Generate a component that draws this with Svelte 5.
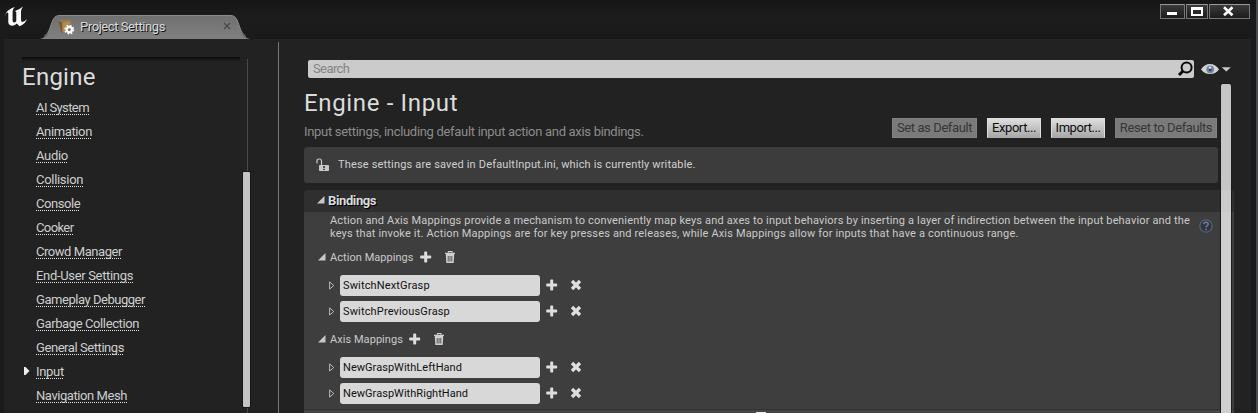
<script>
  const sections = [
    ['AI System', -0.6], ['Animation', -0.37], ['Audio', -0.3], ['Collision', -0.3], ['Console', -0.45],
    ['Cooker', -0.6], ['Crowd Manager', -0.45], ['End-User Settings', -0.33], ['Gameplay Debugger', -0.46],
    ['Garbage Collection', -0.39], ['General Settings', -0.43], ['Input', -0.3], ['Navigation Mesh', -0.43]
  ];
  const active = 'Input';
  const groups = [
    { title: 'Action Mappings', rows: [['SwitchNextGrasp', 0.15], ['SwitchPreviousGrasp', 0.15]] },
    { title: 'Axis Mappings', rows: [['NewGraspWithLeftHand', 0.04], ['NewGraspWithRightHand', 0.04]] }
  ];
</script>

{#snippet plus()}
  <svg class="plus" width="12" height="12" viewBox="0 0 12 12"><path d="M4.200 1.300q0-.8.800-.8h1.400q.8 0 .8.800v3.200h3.200q.8 0 .8.800v1.400q0 .8-.8.800H7.200v3.200q0 .8-.8.800H5q-.8 0-.8-.8V7.500H1q-.8 0-.8-.8V5.300q0-.8.8-.8h3.200z" fill="#dedede" /></svg>
{/snippet}

{#snippet triangle()}
  <svg class="tri" width="8" height="8" viewBox="0 0 8 8"><path d="M7.500 0v7.500H0z" fill="#c8c8c8" /></svg>
{/snippet}

<div class="window">
  <header class="titlebar">
    <svg class="logo" width="25" height="23" viewBox="0 0 25 23">
      <path d="M.5 11.500Q2.500 4.500 10.800 2Q8.600 4 8.600 6.500V15.500q0 2 1.400 2q1 0 2.300-1.300V7.500q0-1.500-1.800-1.300Q15 5 19 1.500Q17 4.200 17 6.500V15.300q0 1.700 1.400 1.700q1.500 0 4.600-2.800Q21 19 15.500 21.300L12.900 18.500Q10.500 20.800 7.800 20.800Q4.300 20.300 4.300 17V8.800q0-1.400-.9-1.400Q1.900 8 .5 11.500z" fill="#fff" />
    </svg>
    <div class="tab">
      <svg class="tabshape" width="210" height="24" viewBox="0 0 210 24">
        <defs><linearGradient id="tg" x1="0" y1="0" x2="0" y2="1"><stop offset="0" stop-color="#707070" /><stop offset="1" stop-color="#808080" /></linearGradient></defs>
        <path d="M0 24C7 22.500 8 18 10 13C13 4 14 .5 20 .5H190C196 .5 197 4 200 13C202 18 203 22.500 210 24z" fill="url(#tg)" />
        <path d="M4 21.500C7.500 19 8.500 16.500 10 13C13 4 14 .5 20 .5H190C196 .5 197 4 200 13C201.500 16.500 202.500 19 206 21.500" fill="none" stroke="#8c8c8c" stroke-width="1" />
      </svg>
      <svg class="tabicon" width="17" height="17" viewBox="0 0 17 17">
        <path d="M.5 1.500L12 1v8L6 14H4z" fill="#a07a4b" /><path d="M.5 1.500L4.500 4v10.500L3 13z" fill="#7a5932" /><path d="M4.500 4l8-2v7l-8 4z" fill="#b48a56" /><path d="M8 8l3-3 2 1v3z" fill="#7e8a45" />
        <circle cx="11.300" cy="10.600" r="2.700" fill="none" stroke="#fff" stroke-width="2.200" />
        <circle cx="11.300" cy="10.600" r="4.200" fill="none" stroke="#fff" stroke-width="1.600" stroke-dasharray="1.700 1.600" />
      </svg>
      <span class="tabtext">Project Settings</span>
      <svg class="tabclose" width="8" height="8" viewBox="0 0 8 8"><path d="M1 1l6 6M7 1l-6 6" stroke="#484848" stroke-width="1.200" /></svg>
    </div>
    <div class="winbtns">
      <span><svg width="23" height="14"><rect x="6" y="8" width="10" height="3" fill="#fff" /></svg></span>
      <span><svg width="20" height="14"><path d="M4 3h12v9H4zM6 6v4h8V6z" fill="#fff" fill-rule="evenodd" /></svg></span>
      <span><svg width="39" height="14"><path d="M14 3.200l8.500 8M22.500 3.200l-8.500 8" stroke="#fff" stroke-width="2.600" /></svg></span>
    </div>
  </header>

  <div class="body">
    <nav class="side">
      <div class="shade"></div>
      <h2>Engine</h2>
      <ul>
        {#each sections as [name, spacing]}
          <li>
            <span class="mark">{#if name === active}<svg width="6" height="10" viewBox="0 0 6 10"><path d="M0 1h1.500L5.500 5L1.500 9H0z" fill="#eee" /></svg>{/if}</span>
            <span class="link" style:letter-spacing="{spacing}px">{name}</span>
          </li>
        {/each}
      </ul>
    </nav>
    <div class="sidescroll"><i></i></div>
    <div class="divider"></div>

    <main>
      <div class="searchrow">
        <div class="search">
          <span>Search</span>
          <svg width="16" height="16" viewBox="0 0 16 16"><circle cx="9.600" cy="6.500" r="5" fill="none" stroke="#0a0a0a" stroke-width="2" /><path d="M5.800 10.300L2 14" stroke="#0a0a0a" stroke-width="3" /></svg>
        </div>
        <svg class="eye" width="30" height="14" viewBox="0 0 30 14">
          <path d="M0 7.500Q3.500 2 9 2Q14.500 2 18 7.500Q14.500 12 9 12Q3.500 12 0 7.500z" fill="#d4d4d0" />
          <circle cx="9.200" cy="7.300" r="3.900" fill="#7385a6" /><circle cx="9.200" cy="7.800" r="1.500" fill="#33415c" /><circle cx="9" cy="5.600" r="1.200" fill="#e3e9f3" />
          <path d="M20.800 5.300h9l-4.500 4.300z" fill="#c9c9c9" />
        </svg>
      </div>
      <div class="headrow">
        <div>
          <h1>Engine - Input</h1>
          <p class="desc">Input settings, including default input action and axis bindings.</p>
        </div>
        <div class="btns">
          <button class="off w85">Set as Default</button>
          <button>Export...</button>
          <button>Import...</button>
          <button class="off w102">Reset to Defaults</button>
        </div>
      </div>
      <div class="notice">
        <svg width="14" height="14" viewBox="0 0 14 14"><path d="M1 5.500V3Q1 1 3.300 1Q5.500 1 5.500 3V7" fill="none" stroke="#c8c8c8" stroke-width="1.200" /><rect x="3" y="7" width="10" height="6" rx=".8" fill="#c8c8c8" /><path d="M8 8v2.200M8 11v1" stroke="#333" stroke-width="1.600" /></svg>
        <span>These settings are saved in DefaultInput.ini, which is currently writable.</span>
      </div>
      <section>
        <div class="sechead">{@render triangle()}<span>Bindings</span></div>
        <div class="secbody">
          <div class="para">
            <p>Action and Axis Mappings provide a mechanism to conveniently map keys and axes to input behaviors by inserting a layer of indirection between the input behavior and the<br />keys that invoke it. Action Mappings are for key presses and releases, while Axis Mappings allow for inputs that have a continuous range.</p>
            <svg width="16" height="16" viewBox="0 0 16 16"><circle cx="8" cy="8" r="6.200" fill="#303640" stroke="#566072" stroke-width="1.300" /><path d="M5.900 6.300Q5.900 4.300 8 4.300Q10.200 4.300 10.200 6.100Q10.200 7.200 9 7.900Q8.100 8.400 8.100 9.500M8.100 10.700v1.500" fill="none" stroke="#727d90" stroke-width="1.500" /></svg>
          </div>
          {#each groups as g}
            <div class="group">
              {@render triangle()}<span>{g.title}</span>{@render plus()}
              <svg class="bin" width="10" height="12" viewBox="0 0 10 12"><path d="M3.500 1.500V.5h3.500v1M0 2.300h10M1 3.500h8" fill="none" stroke="#d0d0d0" stroke-width="1.200" /><path d="M.8 3.500h8.400L8.700 12H1.300z" fill="#d0d0d0" /><path d="M3.200 5v5.500M5 5v5.500M6.800 5v5.500" stroke="#4a4a4a" stroke-width=".9" /></svg>
            </div>
            {#each g.rows as [name, spacing]}
              <div class="row">
                <svg class="exp" width="6" height="9" viewBox="0 0 6 9"><path d="M.6 .9v7.200L4.800 4.500z" fill="none" stroke="#b8b8b8" stroke-width="1" /></svg>
                <div class="field" style:letter-spacing="{spacing}px">{name}</div>
                {@render plus()}
                <svg class="del" width="12" height="12" viewBox="0 0 12 12"><path d="M2 2l8 8M10 2l-8 8" stroke="#dedede" stroke-width="3.300" /></svg>
              </div>
            {/each}
          {/each}
        </div>
        <div class="next"><i></i></div>
      </section>
      <div class="mainscroll"></div>
    </main>
  </div>
</div>

<style>
  :global(body) { background: #222; overflow: hidden; }
  .window { box-sizing: border-box; width: 1258px; height: 413px; overflow: hidden; font-family: Roboto, sans-serif; font-size: 13px; color: #ccc; background: #1b1b1b; border-right: 2px solid #4b4b52; }
  svg { display: block; flex: none; }
  .titlebar { height: 39px; display: flex; background: linear-gradient(#151515, #1c1c1c 40%, #1a1a1a); }
  .logo { margin: 5px 0 0 4px; }
  .tab { position: relative; width: 210px; height: 24px; margin: 15px 0 0 11px; display: flex; align-items: center; color: #dadada; }
  .tabshape { position: absolute; left: 0; top: 0; }
  .tabicon { position: relative; margin: 0 0 0 18px; }
  .tabtext { position: relative; margin: -2px 0 0 5px; flex: 1; letter-spacing: -.42px; text-shadow: 1px 1px 0 #111; }
  .tabclose { position: relative; margin: -2px 19px 0 0; }
  .winbtns { margin: 4px 6px 0 auto; display: flex; gap: 1px; height: 15px; }
  .winbtns span { box-sizing: border-box; height: 15px; border: 1px solid #777; border-top-color: #999; background: linear-gradient(#3a3a3a, #1c1c1c); }
  .winbtns svg { margin-top: -1px; }

  .body { display: flex; height: 374px; margin: 0 5px 0 4px; background: #222; }
  .side { width: 218px; padding: 18px 0 0 18px; }
  .shade { height: 5px; background: linear-gradient(#0c0c0c, #222); }
  h1, h2 { font-weight: 400; font-size: 24px; line-height: 28px; margin: 0; color: #dcdcdc; }
  h2 { margin-top: 1px; letter-spacing: .25px; }
  ul { list-style: none; padding: 0; margin: 5px 0 0; }
  li { height: 24px; display: flex; align-items: flex-start; }
  .mark { width: 14px; padding: 2px 0 0 2px; box-sizing: border-box; height: 20px; display: flex; align-items: center; }
  .link { line-height: 15px; padding-top: 4px; color: #cecece;
    background: repeating-linear-gradient(90deg, #e4e4e4 0 1px, transparent 1px 2px) 0 100% / 100% 1px no-repeat; }
  .sidescroll { width: 7px; margin: 20px 0 0 3px; background: linear-gradient(90deg, transparent 4px, #484848 4px 5px, transparent 5px); }
  .sidescroll i { display: block; width: 7px; height: 235px; margin-top: 113px; background: #c4c4c4; border-radius: 1px; box-shadow: 0 0 0 1px #171717; }
  .divider { width: 1px; margin: 3px 0 0 28px; background: #777; }

  main { position: relative; flex: 1; padding: 21px 0 0 25px; }
  .searchrow { display: flex; align-items: center; height: 18px; padding-left: 4px; }
  .search { width: 886px; height: 18px; box-sizing: border-box; padding: 0 1px 0 5px; background: #cbcbcb; border-radius: 2px; display: flex; align-items: center; justify-content: space-between; color: #858585; letter-spacing: -.6px; }
  .search span { margin-top: -1px; }
  .eye { margin: 0 0 0 7px; }
  .headrow { display: flex; justify-content: space-between; width: 913px; height: 69px; }
  h1 { margin-top: 11px; letter-spacing: .65px; white-space: nowrap; }
  .desc { margin: 7px 0 0; line-height: 16px; color: #8c8c8c; letter-spacing: -.31px; white-space: nowrap; }
  .btns { display: flex; gap: 10px; margin-top: 40px; }
  button { width: 54px; height: 20px; box-sizing: border-box; border: 1px solid #dcdcdc; border-bottom-color: #aaa; background: linear-gradient(#dedede, #a8a8a8); color: #0d0d0d; font: 13px/16px Roboto, sans-serif; letter-spacing: -.45px; padding: 0; white-space: nowrap; }
  .off { background: #7a7a7a; border-color: #828282; color: #363636; letter-spacing: -.4px; }
  .w85 { width: 85px; }
  .w102 { width: 102px; }
  .notice { width: 914px; height: 36px; box-sizing: border-box; padding: 0 0 2px 12px; display: flex; align-items: center; gap: 8px; background: #3c3c3c; border-radius: 3px; font-size: 11px; letter-spacing: .17px; color: #d0d0d0; }
  .notice svg { margin-top: 2px; }
  section { width: 930px; margin-top: 7px; font-size: 11px; }
  .sechead { height: 22px; box-sizing: border-box; display: flex; align-items: center; gap: 4px; padding: 0 0 2px 13px; background: #2f2f2f; border-radius: 3px 3px 0 0; color: #ddd; font-weight: 700; font-size: 13px; letter-spacing: -.38px; text-shadow: 1px 1px 0 #000; }
  .sechead span { margin-left: -1px; }
  .secbody { height: 197px; background: #3e3e3e; }
  .para { display: flex; padding: 2px 0 0 26px; height: 31px; }
  .para p { margin: 0; width: 868px; line-height: 13px; letter-spacing: .162px; white-space: nowrap; color: #cacaca; }
  .para svg { margin-top: 4px; }
  .group { height: 26px; box-sizing: border-box; display: flex; align-items: center; padding: 0 0 2px 14px; }
  .para + .group { height: 30px; padding-bottom: 6px; }
  .group .tri { margin-top: -1px; }
  .group span { margin: 0 6px 0 4px; letter-spacing: .05px; color: #cacaca; }
  .group .bin { margin-left: 13px; }
  .row + .group { height: 30px; padding-bottom: 6px; }
  .row { height: 21px; margin-bottom: 5px; display: flex; align-items: center; padding-left: 25px; }
  .row svg { margin-top: -1px; }
  .field { width: 200px; height: 21px; box-sizing: border-box; margin: 0 6px 0 5px; padding-left: 3px; line-height: 21px; background: #d8d8d8; border-radius: 3px; color: #111; }
  .del { margin-left: 12px; }
  .next { height: 6px; background: #464646; border-top: 1px solid #303030; }
  .next i { display: block; width: 10px; height: 2px; margin-left: 452px; position: relative; top: 2px; background: #e8e8e8; }
  .mainscroll { position: absolute; left: 942px; top: 45px; width: 10px; bottom: 0; background: linear-gradient(#c6c6c6 106px, #cbcbcb 106px 128px, #cfcfcf 128px); border-radius: 2px 2px 0 0; box-shadow: 0 0 0 1px #1c1c1c; }
</style>
